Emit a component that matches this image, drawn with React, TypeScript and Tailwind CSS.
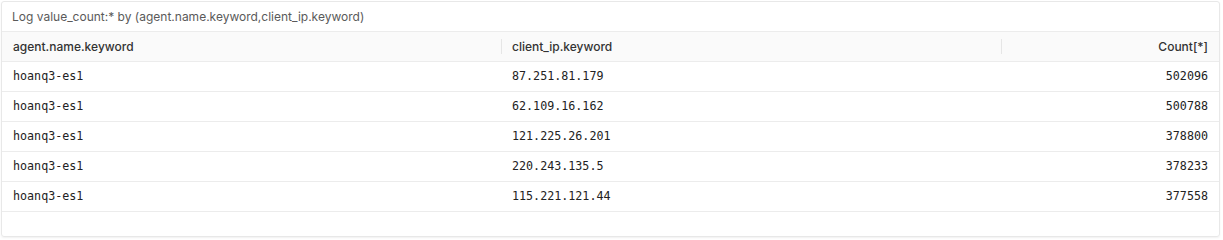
import React from 'react';

const rows = [
    { agent: 'hoanq3-es1', ip: '87.251.81.179', count: '502096' },
    { agent: 'hoanq3-es1', ip: '62.109.16.162', count: '500788' },
    { agent: 'hoanq3-es1', ip: '121.225.26.201', count: '378800' },
    { agent: 'hoanq3-es1', ip: '220.243.135.5', count: '378233' },
    { agent: 'hoanq3-es1', ip: '115.221.121.44', count: '377558' },
];

const mono = { fontFamily: '"DejaVu Sans Mono", Menlo, monospace' };

const App: React.FC = () => {
    return (
        <div className="w-[1223px] h-[240px] bg-white pt-px pl-px pr-[3px] font-['Inter',sans-serif]">
            <div className="h-[236px] rounded-[3px] border border-[#e8e8e8] shadow-[0_1px_2px_rgba(0,0,0,0.06)] overflow-hidden">
                <div className="h-[30px] flex items-center px-[10px] text-[12px] text-[#5a5a5a] border-b border-[#ececec]">
                    Log value_count:* by (agent.name.keyword,client_ip.keyword)
                </div>
                <div className="grid grid-cols-[499px_500px_1fr] h-[30px] bg-[#fafafa] border-b border-[#ececec] text-[12px] text-[#333] font-medium">
                    <div className="flex items-center px-[11px]">agent.name.keyword</div>
                    <div className="flex items-center px-[11px] relative">
                        <span className="absolute left-0 top-[7px] bottom-[7px] w-px bg-[#e6e6e6]" />
                        client_ip.keyword
                    </div>
                    <div className="flex items-center justify-end px-[11px] relative">
                        <span className="absolute left-0 top-[7px] bottom-[7px] w-px bg-[#e6e6e6]" />
                        Count[*]
                    </div>
                </div>
                {rows.map((r, i) => (
                    <div key={i} className="grid grid-cols-[499px_500px_1fr] h-[30px] border-b border-[#ececec] text-[11.7px] text-[#222]" style={mono}>
                        <div className="flex items-center px-[11px]">{r.agent}</div>
                        <div className="flex items-center px-[11px]">{r.ip}</div>
                        <div className="flex items-center justify-end px-[11px]">{r.count}</div>
                    </div>
                ))}
            </div>
        </div>
    );
};

export default App;
